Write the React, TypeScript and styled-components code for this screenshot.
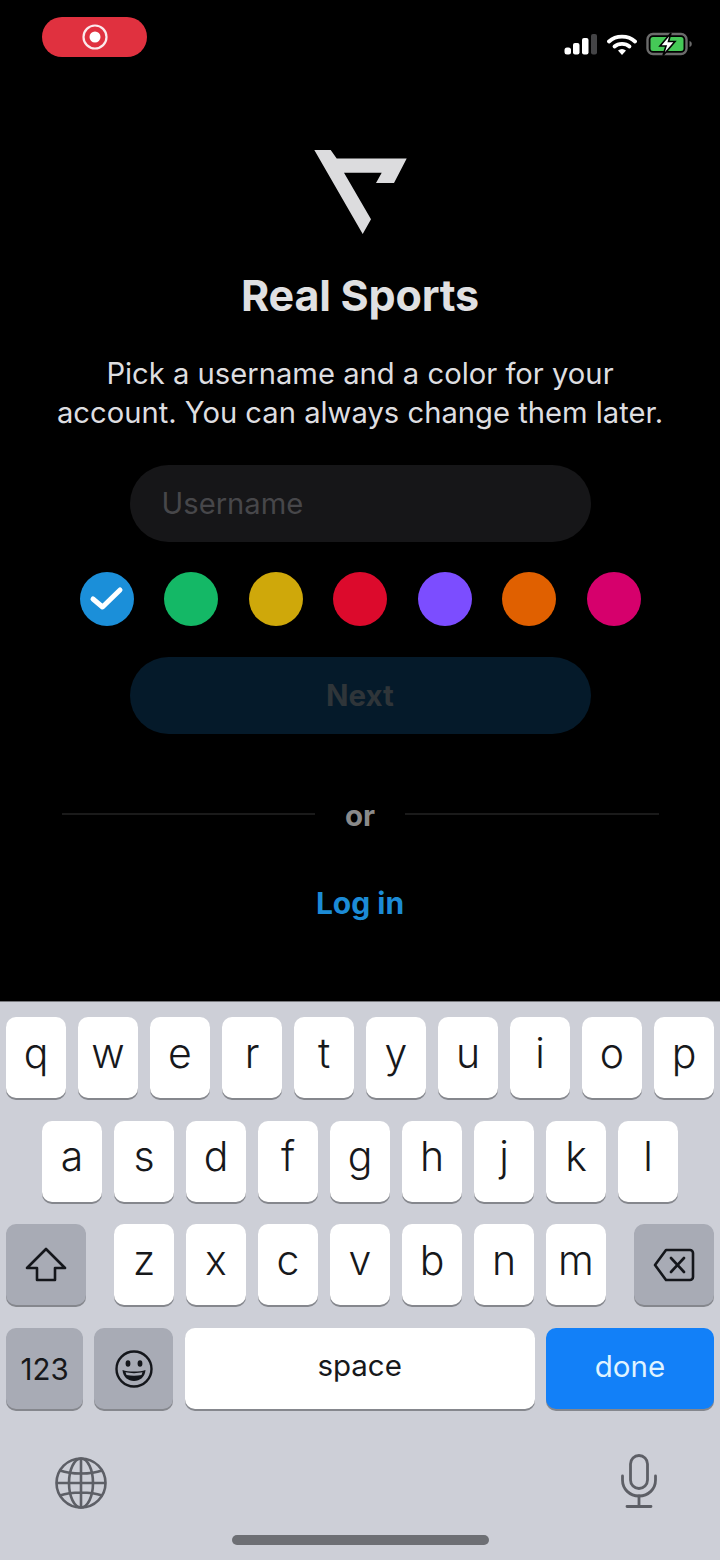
import * as React from "react";
import styled, { createGlobalStyle } from "styled-components";

const GlobalStyle = createGlobalStyle`
	html, body {
		margin: 0;
		padding: 0;
		background: #000;
	}
	* {
		box-sizing: border-box;
	}
`;

const Screen = styled.div`
	width: 720px;
	height: 1560px;
	display: flex;
	flex-direction: column;
	background: #000;
	font-family: Inter, "Liberation Sans", sans-serif;
	overflow: hidden;
`;

const StatusBar = styled.div`
	height: 150px;
	flex: none;
	display: flex;
	justify-content: space-between;
	align-items: flex-start;
	padding: 17px 27px 0 42px;
`;

const RecordPill = styled.div`
	width: 105px;
	height: 40px;
	border-radius: 20px;
	background: #e0313f;
	display: flex;
	align-items: center;
	justify-content: center;
`;

const StatusIcons = styled.div`
	display: flex;
	align-items: center;
	gap: 9px;
	margin-top: 15px;
`;

const Main = styled.main`
	display: flex;
	flex-direction: column;
	align-items: center;
`;

const LogoMark = styled.svg`
	margin-left: 2px;
`;

const Title = styled.h1`
	margin: 33px 0 0;
	font-size: 43px;
	line-height: 52px;
	font-weight: 700;
	color: #e0e0e2;
	letter-spacing: -0.2px;
`;

const Subtitle = styled.p`
	margin: 33px 0 0;
	font-size: 29.2px;
	line-height: 39px;
	font-weight: 400;
	color: #dedee0;
	text-align: center;
	white-space: nowrap;
`;

const UsernameField = styled.div`
	width: 461px;
	height: 77px;
	margin-top: 33px;
	border-radius: 39px;
	background: #161618;
	color: #47474a;
	font-size: 29.2px;
	display: flex;
	align-items: center;
	padding-left: 32px;
`;

const Swatches = styled.div`
	display: flex;
	gap: 30.5px;
	margin-top: 30px;
`;

const Swatch = styled.div<{ $color: string }>`
	width: 54px;
	height: 54px;
	border-radius: 50%;
	background: ${(p) => p.$color};
	display: flex;
	align-items: center;
	justify-content: center;
`;

const NextButton = styled.div`
	width: 461px;
	height: 77px;
	margin-top: 31px;
	padding-bottom: 2px;
	border-radius: 39px;
	background: #051a2a;
	color: #2f3539;
	font-size: 29.5px;
	font-weight: 700;
	display: flex;
	align-items: center;
	justify-content: center;
`;

const Divider = styled.div`
	width: 597px;
	margin-top: 61px;
	display: flex;
	align-items: center;
	gap: 30px;
	color: #8a8a8a;
	font-size: 29.5px;
	font-weight: 700;
	line-height: 40px;

	&::before,
	&::after {
		content: "";
		flex: 1;
		height: 2px;
		margin-top: -2px;
		background: #1a1a1a;
	}
`;

const LoginLink = styled.div`
	margin-top: 48px;
	color: #1c8bd6;
	font-size: 30px;
	font-weight: 700;
	line-height: 40px;
`;

const Keyboard = styled.div`
	margin-top: auto;
	height: 559px;
	flex: none;
	background: #cdcfd7;
	border-top: 1px solid #77787c;
	padding: 15px 6px 0;
	display: flex;
	flex-direction: column;
	gap: 22.7px;
`;

const KeyRow = styled.div<{ $between?: boolean; $tight?: boolean }>`
	display: flex;
	justify-content: ${(p) => (p.$between ? "space-between" : "center")};
	gap: ${(p) => (p.$tight ? 0 : 12)}px;
`;

const LetterGroup = styled.div`
	display: flex;
	gap: 12px;
`;

const Key = styled.div<{ $width?: number; $kind?: "letter" | "action" | "primary" }>`
	width: ${(p) => p.$width ?? 60}px;
	height: 81px;
	flex: none;
	border-radius: 10px;
	display: flex;
	align-items: center;
	justify-content: center;
	padding-bottom: ${(p) => (p.$kind === "primary" ? 6 : 0)}px;
	font-size: ${(p) => (p.$kind === "letter" || !p.$kind ? 41 : 29.5)}px;
	color: ${(p) => (p.$kind === "primary" ? "#dff3ff" : "#17181b")};
	background: ${(p) =>
		p.$kind === "action"
			? "#a8abb5"
			: p.$kind === "primary"
				? "#1280f8"
				: "#fff"};
	box-shadow: 0 2px 0 #85878d;
`;

const LetterCap = styled.span`
	position: relative;
	top: -5px;
	font-weight: 300;
`;

const SpaceLabel = styled.span`
	font-size: 29.5px;
	font-weight: 400;
	position: relative;
	top: -4px;
`;

const BottomRow = styled.div`
	display: flex;
	justify-content: space-between;
	align-items: flex-start;
	padding: 0 57px 0 49px;
	margin-top: 25px;
`;

const MicIcon = styled.svg`
	margin-top: -3px;
`;

const HomeBar = styled.div`
	align-self: center;
	width: 257px;
	height: 10px;
	margin-top: 4px;
	border-radius: 5px;
	background: #6d6f74;
`;

const topRow = ["q", "w", "e", "r", "t", "y", "u", "i", "o", "p"];
const midRow = ["a", "s", "d", "f", "g", "h", "j", "k", "l"];
const lowRow = ["z", "x", "c", "v", "b", "n", "m"];
const swatches = ["#1b8fd9", "#14b866", "#cfa80a", "#dc0a2c", "#7c4dff", "#e06000", "#d6006c"];

const LetterKey = ({ letter }: { letter: string }) => (
	<Key $kind="letter">
		<LetterCap>{letter}</LetterCap>
	</Key>
);

const Logo = () => (
	<LogoMark width="94" height="86" viewBox="314 150 94 86">
		<polygon
			fill="#dcdcde"
			points="314.3,150 330.7,150 336.7,158.5 406.7,158.5 394,183 376,183 381.7,172.7 344,172.7 371,219.3 362.7,234"
		/>
	</LogoMark>
);

export default function App() {
	return (
		<Screen>
			<GlobalStyle />
			<StatusBar>
				<RecordPill>
					<svg width="28" height="28" viewBox="0 0 28 28">
						<circle cx="14" cy="14" r="11.5" fill="none" stroke="#fbeaec" strokeWidth="2.2" />
						<circle cx="14" cy="14" r="5.5" fill="#fff" />
					</svg>
				</RecordPill>
				<StatusIcons>
					<svg width="34" height="22" viewBox="0 0 34 22">
						<rect x="0.5" y="14.5" width="6.5" height="7" rx="2.5" fill="#fff" />
						<rect x="9" y="10" width="6.5" height="11.5" rx="2" fill="#fff" />
						<rect x="18" y="5" width="6.5" height="16.5" rx="2" fill="#fff" />
						<rect x="27" y="1" width="6" height="20.5" rx="2" fill="#444446" />
					</svg>
					<svg width="30" height="22" viewBox="0 0 30 22">
						<path d="M2 8.5 C9 2 21 2 28 8.5" fill="none" stroke="#fff" strokeWidth="3.8" strokeLinecap="round" />
						<path d="M7.5 13.5 C11.5 10 18.5 10 22.5 13.5" fill="none" stroke="#fff" strokeWidth="3.8" strokeLinecap="round" />
						<path d="M11 17.5 L15 22 L19 17.5 C16.5 15.5 13.5 15.5 11 17.5 Z" fill="#fff" />
					</svg>
					<svg width="47" height="24" viewBox="0 0 47 24">
						<rect x="1.5" y="2" width="39" height="20" rx="5.5" fill="none" stroke="#6b6b6b" strokeWidth="2.4" />
						<rect x="4.5" y="5" width="33" height="14" rx="2.5" fill="#45c957" />
						<path d="M43.5 9 C46.5 9.5 46.5 14.5 43.5 15 Z" fill="#6b6b6b" />
						<path d="M25 1 L14 14 H20 L17 23.5 L29 9.5 H22.5 Z" fill="#fff" stroke="#000" strokeWidth="1.6" />
					</svg>
				</StatusIcons>
			</StatusBar>
			<Main>
				<Logo />
				<Title>Real Sports</Title>
				<Subtitle>
					Pick a username and a color for your
					<br />
					account. You can always change them later.
				</Subtitle>
				<UsernameField>Username</UsernameField>
				<Swatches>
					{swatches.map((color, i) => (
						<Swatch key={color} $color={color}>
							{i === 0 && (
								<svg width="36" height="30" viewBox="0 0 36 30">
									<path d="M4 15 L13.5 23 L31 6" fill="none" stroke="#fff" strokeWidth="5" strokeLinecap="round" strokeLinejoin="round" />
								</svg>
							)}
						</Swatch>
					))}
				</Swatches>
				<NextButton>Next</NextButton>
				<Divider>or</Divider>
				<LoginLink>Log in</LoginLink>
			</Main>
			<Keyboard>
				<KeyRow>
					{topRow.map((k) => (
						<LetterKey key={k} letter={k} />
					))}
				</KeyRow>
				<KeyRow>
					{midRow.map((k) => (
						<LetterKey key={k} letter={k} />
					))}
				</KeyRow>
				<KeyRow $between>
					<Key $kind="action" $width={80}>
						<svg width="42" height="36" viewBox="0 0 42 36">
							<path d="M21 2 L40 21 H30 V33 H12 V21 H2 Z" fill="none" stroke="#14161b" strokeWidth="2.6" strokeLinejoin="round" />
						</svg>
					</Key>
					<LetterGroup>
						{lowRow.map((k) => (
							<LetterKey key={k} letter={k} />
						))}
					</LetterGroup>
					<Key $kind="action" $width={80}>
						<svg width="42" height="34" viewBox="0 0 42 34">
							<path d="M13 2 H37 A3 3 0 0 1 40 5 V29 A3 3 0 0 1 37 32 H13 L2 17 Z" fill="none" stroke="#14161b" strokeWidth="2.6" strokeLinejoin="round" />
							<path d="M18 10 L31 24 M31 10 L18 24" fill="none" stroke="#14161b" strokeWidth="2.6" strokeLinecap="round" />
						</svg>
					</Key>
				</KeyRow>
				<KeyRow $between $tight>
					<Key $kind="action" $width={77}>
						123
					</Key>
					<Key $kind="action" $width={79}>
						<svg width="40" height="40" viewBox="0 0 40 40">
							<circle cx="20" cy="20" r="17.5" fill="none" stroke="#14161b" strokeWidth="2.4" />
							<ellipse cx="14" cy="14.5" rx="2.4" ry="3.2" fill="#14161b" />
							<ellipse cx="26" cy="14.5" rx="2.4" ry="3.2" fill="#14161b" />
							<path d="M8.5 21 C14 23 26 23 31.5 21 C31 28 26 32 20 32 C14 32 9 28 8.5 21 Z" fill="#14161b" />
							<path d="M11.5 23.3 C16 24.4 24 24.4 28.5 23.3 L27.5 26 C23 27 17 27 12.5 26 Z" fill="#a8abb5" />
						</svg>
					</Key>
					<Key $kind="letter" $width={350}>
						<SpaceLabel>space</SpaceLabel>
					</Key>
					<Key $kind="primary" $width={168}>
						done
					</Key>
				</KeyRow>
				<BottomRow>
					<svg width="52" height="52" viewBox="0 0 52 52">
						<g fill="none" stroke="#5d5f66" strokeWidth="2.6">
							<circle cx="26" cy="26" r="24.5" />
							<ellipse cx="26" cy="26" rx="12" ry="24.5" />
							<path d="M26 1.5 V50.5 M1.5 26 H50.5 M5 13.5 C16 17.5 36 17.5 47 13.5 M5 38.5 C16 34.5 36 34.5 47 38.5" />
						</g>
					</svg>
					<MicIcon width="36" height="54" viewBox="0 0 36 54">
						<g fill="none" stroke="#5d5f66" strokeWidth="2.8" strokeLinecap="round">
							<rect x="9.5" y="1.5" width="17" height="33" rx="8.5" />
							<path d="M1.5 22 V26 C1.5 35 8.5 42 18 42 C27.5 42 34.5 35 34.5 26 V22" />
							<path d="M18 42 V52 M6 52.5 H30" />
						</g>
					</MicIcon>
				</BottomRow>
				<HomeBar />
			</Keyboard>
		</Screen>
	);
}
